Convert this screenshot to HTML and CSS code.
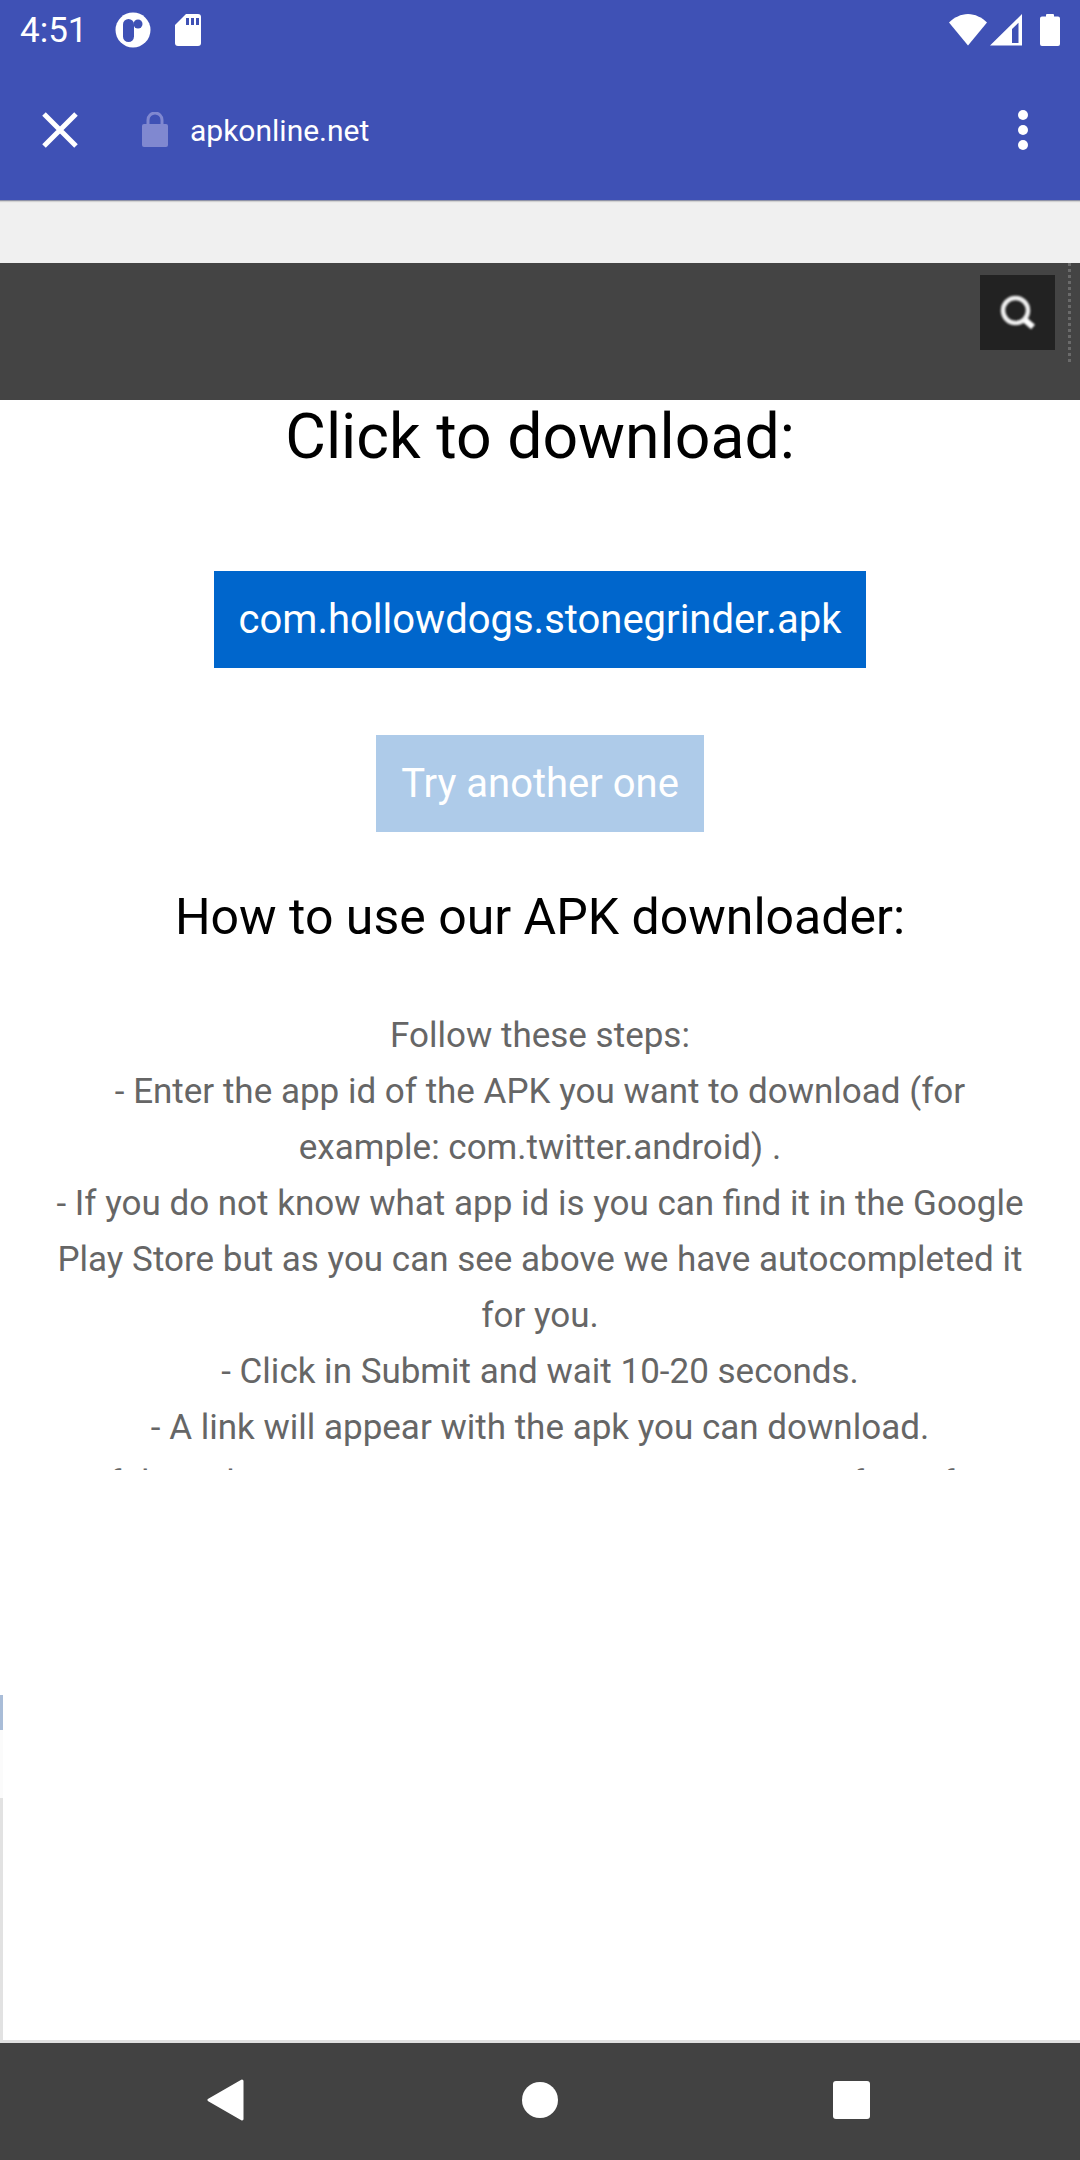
FILE: index.html
```html
<!DOCTYPE html>
<html lang="en">
<head>
    <meta charset="UTF-8">
    <title>apkonline.net</title>
    <link rel="stylesheet" href="styles.css">
</head>
<body>
    <header class="app-header">
        <div class="status-bar">
            <span class="clock">4:51</span>
            <svg class="status-icon" width="36" height="36" viewBox="0 0 36 36">
                <circle cx="18" cy="18" r="17.5" fill="#fff"/>
                <rect x="8" y="7" width="11" height="23" rx="5.5" fill="#3f51b5"/>
                <circle cx="23" cy="12" r="4.5" fill="#3f51b5"/>
            </svg>
            <svg class="status-icon sd" width="26" height="32" viewBox="0 0 26 32">
                <path d="M11 0H23a3 3 0 0 1 3 3V29a3 3 0 0 1-3 3H3a3 3 0 0 1-3-3V11Z" fill="#fff"/>
                <path d="M11 4h3v7h-3zM16 4h3v7h-3zM21 4h3v7h-3z" fill="#3f51b5"/>
            </svg>
            <span class="spacer"></span>
            <svg width="38" height="32" viewBox="0 0 38 32">
                <path d="M0 8.500C5 3.500 12 0 19 0S33 3.500 38 8.500L19 31.500Z" fill="#fff"/>
            </svg>
            <svg class="signal" width="33" height="32" viewBox="0 0 33 32">
                <path d="M32 0V31.500H0Z M28.500 8.700L22 15V29H28.500Z" fill="#fff" fill-rule="evenodd"/>
            </svg>
            <svg class="battery" width="20" height="32" viewBox="0 0 20 32">
                <path d="M6 2.500V1a1 1 0 0 1 1-1H13a1 1 0 0 1 1 1V2.500H18a2 2 0 0 1 2 2V30a2 2 0 0 1-2 2H2a2 2 0 0 1-2-2V4.500a2 2 0 0 1 2-2Z" fill="#fff"/>
            </svg>
        </div>
        <div class="toolbar">
            <svg class="close-icon" width="36" height="36" viewBox="0 0 36 36">
                <path d="M2 2L34 34M34 2L2 34" stroke="#fff" stroke-width="5" fill="none"/>
            </svg>
            <svg class="lock-icon" width="28" height="36" viewBox="0 0 28 36">
                <path d="M7 12V8a7 7 0 0 1 14 0V12" stroke="#8088d0" stroke-width="3" fill="none"/>
                <rect x="1" y="12" width="26" height="23" rx="2" fill="#8088d0"/>
            </svg>
            <span class="url">apkonline.net</span>
            <span class="spacer"></span>
            <div class="menu-dots"><i></i><i></i><i></i></div>
        </div>
    </header>

    <div class="grey-strip"></div>

    <div class="search-bar">
        <button class="search-btn">
            <svg width="36" height="36" viewBox="0 0 36 36">
                <circle cx="15.500" cy="15.500" r="12.500" stroke="#f0f0f0" stroke-width="4.500" fill="none"/>
                <path d="M25 25L33 32" stroke="#fff" stroke-width="6" fill="none"/>
            </svg>
        </button>
        <div class="dotted"></div>
    </div>

    <main class="content">
        <div class="page-edge"></div>
        <div class="scroll-box">
            <h1>Click to download:</h1>
            <a class="btn btn-primary">com.hollowdogs.stonegrinder.apk</a>
            <a class="btn btn-faded">Try another one</a>
            <h2>How to use our APK downloader:</h2>
            <p class="steps">
                Follow these steps:<br>
                - Enter the app id of the APK you want to download (for example: com.twitter.android) .<br>
                - If you do not know what app id is you can find it in the Google Play Store but as you can see above we have autocompleted it for you.<br>
                - Click in Submit and wait 10-20 seconds.<br>
                - A link will appear with the apk you can download.<br>
                - If the apk is not on our server you can try again after a few minutes.
            </p>
        </div>
    </main>

    <nav class="nav-bar">
        <svg width="38" height="42" viewBox="0 0 38 42">
            <path d="M35 2L2 21L35 40Z" fill="#fff" stroke="#fff" stroke-width="3" stroke-linejoin="round"/>
        </svg>
        <span class="nav-home"></span>
        <span class="nav-square"></span>
    </nav>
</body>
</html>
```

FILE: styles.css
```css
* {
    box-sizing: border-box;
}
html, body {
    margin: 0;
    padding: 0;
}
body {
    width: 1080px;
    height: 2160px;
    font-family: Roboto, "Liberation Sans", sans-serif;
    background: #fff;
    display: flex;
    flex-direction: column;
    overflow: hidden;
}
.spacer {
    flex: 1;
}

.app-header {
    position: relative;
    height: 201px;
    background: #3f51b5;
    border-bottom: 1px solid #8f93a8;
    box-shadow: 0 1px 1px rgba(0, 0, 0, 0.12);
    color: #fff;
}
.status-bar {
    height: 60px;
    display: flex;
    align-items: center;
    padding: 0 20px 0 20px;
}
.clock {
    font-size: 35px;
    width: 95px;
}
.status-icon.sd {
    margin-left: 24px;
}
.signal {
    margin-left: 3px;
}
.battery {
    margin-left: 17px;
}
.toolbar {
    height: 140px;
    display: flex;
    align-items: center;
    padding: 0 0 0 42px;
}
.lock-icon {
    margin-left: 63px;
}
.url {
    margin-left: 21px;
    font-size: 30px;
}
.menu-dots {
    display: flex;
    flex-direction: column;
    gap: 5px;
    margin-right: 52px;
}
.menu-dots i {
    display: block;
    width: 10px;
    height: 10px;
    border-radius: 50%;
    background: #fff;
}

.grey-strip {
    height: 62px;
    background: #f0f0f0;
}

.search-bar {
    height: 137px;
    background: #444;
    display: flex;
    align-items: flex-start;
    justify-content: flex-end;
    padding: 12px 9px 0 0;
}
.search-btn {
    width: 75px;
    height: 75px;
    background: #222;
    border: 0;
    padding: 0;
    display: flex;
    align-items: center;
    justify-content: center;
}
.search-btn svg {
    filter: blur(1px);
}
.dotted {
    width: 3px;
    height: 100px;
    margin: -12px 0 0 13px;
    background: repeating-linear-gradient(#6a6a6a 0 3px, transparent 3px 6px);
}

.content {
    position: relative;
    height: 1643px;
    background: #fff;
    border-bottom: 3px solid #e0e0e0;
}
.page-edge {
    position: absolute;
    left: 0;
    top: 1295px;
    width: 3px;
    height: 345px;
    background: linear-gradient(#a9bdd8 0 35px, #fbfbfb 35px 103px, #e2e2e2 103px);
}
.scroll-box {
    height: 1070px;
    overflow: hidden;
    text-align: center;
    padding: 0 45px;
}
h1 {
    font-size: 62.500px;
    font-weight: 400;
    line-height: 74px;
    margin: 0 0 97px;
    color: #000;
}
.btn {
    display: block;
    width: max-content;
    margin: 0 auto 67px;
    padding: 0 25px;
    height: 97px;
    line-height: 97px;
    font-size: 40px;
    color: #fff;
    background: #06c;
}
.btn-faded {
    background: #aecbe9;
    margin-bottom: 57px;
}
h2 {
    font-size: 50px;
    font-weight: 400;
    line-height: 56px;
    margin: 0 0 63px;
    color: #000;
}
.steps {
    font-size: 35px;
    line-height: 56px;
    margin: 0;
    color: #666;
}

.nav-bar {
    height: 117px;
    background: #424242;
    display: flex;
    align-items: center;
    padding: 0 210px 3px 207px;
    justify-content: space-between;
}
.nav-home {
    width: 36px;
    height: 36px;
    margin-left: 2px;
    border-radius: 50%;
    background: #fff;
}
.nav-square {
    width: 37px;
    height: 38px;
    border-radius: 3px;
    background: #fff;
}
```
